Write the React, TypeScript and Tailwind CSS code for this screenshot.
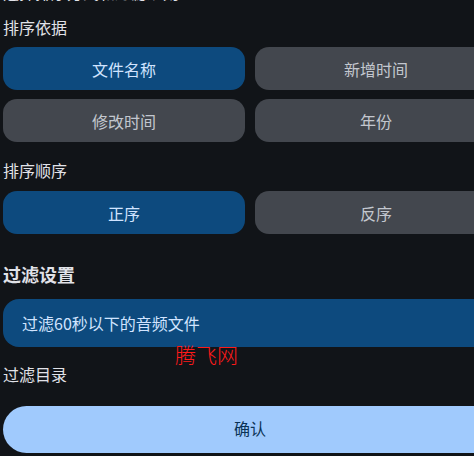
import React from 'react';

const font = { fontFamily: '"Noto Sans CJK SC", "Noto Sans", sans-serif' };

interface Option {
  label: string;
  active?: boolean;
}

const sortBy: Option[] = [
  { label: '文件名称', active: true },
  { label: '新增时间' },
  { label: '修改时间' },
  { label: '年份' },
];

const sortOrder: Option[] = [{ label: '正序', active: true }, { label: '反序' }];

const OptionButton: React.FC<{ option: Option }> = ({ option }) => (
  <button
    className={
      option.active
        ? 'flex h-[43px] items-center justify-center rounded-[14px] bg-[#0d4a7e] text-[16px] text-[#d1e4ff]'
        : 'flex h-[43px] items-center justify-center rounded-[14px] bg-[#43474e] text-[16px] text-[#c3c7cf]'
    }
  >
    {option.label}
  </button>
);

export default function App() {
  return (
    <div className="relative h-[456px] w-full overflow-hidden bg-[#111418]" style={font}>
      <div className="flex w-[500px] flex-col px-[3px]">
        <div className="mt-[-20px] h-[24px] text-[16px] leading-[24px] text-[#e1e2e8]">选择排序方式和过滤规则</div>

        <div className="mt-[11px] h-[24px] text-[16px] leading-[24px] text-[#e1e2e8]">排序依据</div>
        <div className="mt-[8px] grid grid-cols-2 gap-x-[10px] gap-y-[9px]">
          {sortBy.map(o => (
            <OptionButton key={o.label} option={o} />
          ))}
        </div>

        <div className="mt-[16px] h-[24px] text-[16px] leading-[24px] text-[#e1e2e8]">排序顺序</div>
        <div className="mt-[9px] grid grid-cols-2 gap-x-[10px]">
          {sortOrder.map(o => (
            <OptionButton key={o.label} option={o} />
          ))}
        </div>

        <div className="mt-[26px] h-[28px] text-[18px] font-bold leading-[28px] text-[#e1e2e8]">过滤设置</div>
        <div className="mt-[11px] flex h-[48px] items-center rounded-2xl bg-[#0d4a7e] px-[19px] text-[16px] text-[#d1e4ff]">
          过滤60秒以下的音频文件
        </div>

        <div className="mt-[15px] h-[24px] text-[16px] leading-[24px] text-[#e1e2e8]">过滤目录</div>

        <button className="mt-[20px] flex h-[47px] items-center justify-center rounded-full bg-[#a0cafd] pb-[4px] text-[16px] text-[#0b3356]">
          确认
        </button>
      </div>

      <div className="absolute left-[175px] top-[340px] text-[21px] font-light leading-[28px] text-[#ff1a1a]">腾飞网</div>
    </div>
  );
}
